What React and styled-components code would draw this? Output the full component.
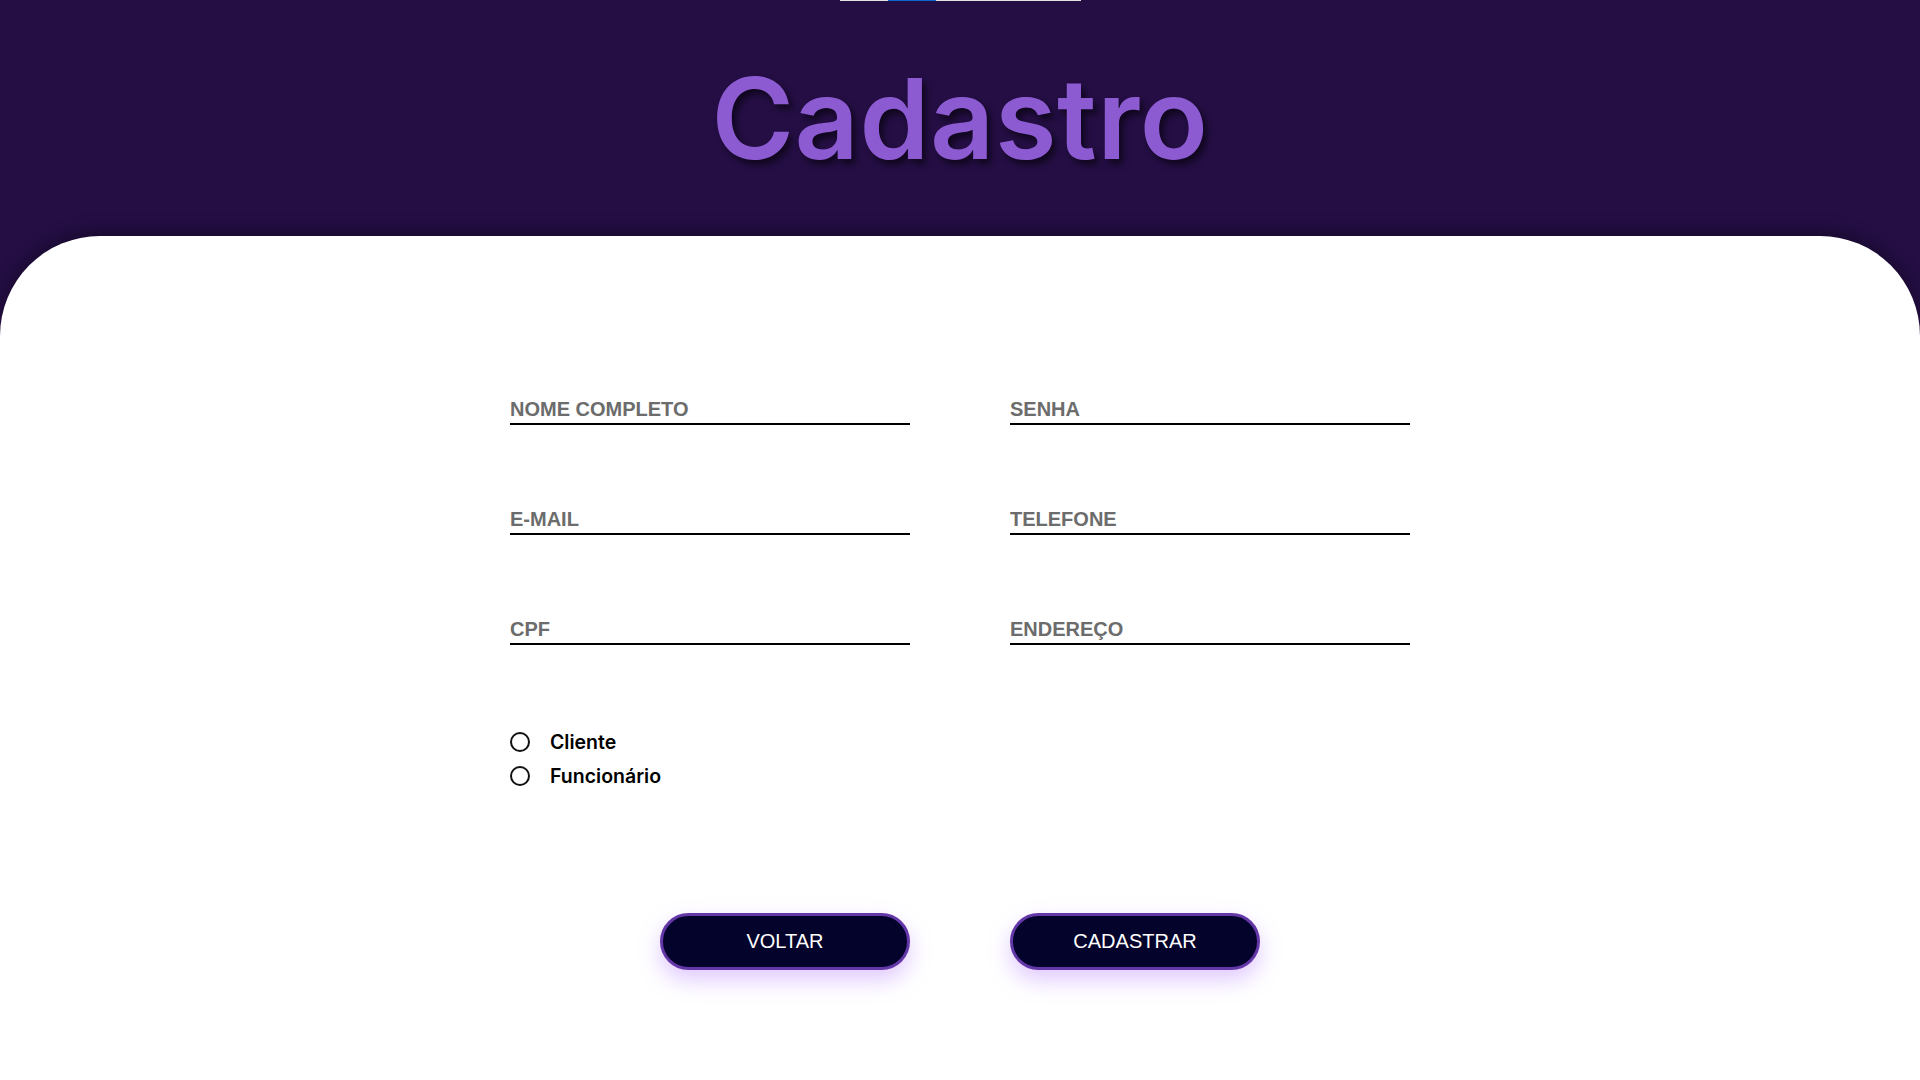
import React from "react";
import styled, { createGlobalStyle } from "styled-components";

const Global = createGlobalStyle`
  html, body { margin: 0; padding: 0; }
  body {
    background: #240e44;
    font-family: "Liberation Sans", Arial, sans-serif;
  }
  * { box-sizing: border-box; }
`;

const Page = styled.div`
  min-height: 100vh;
  display: flex;
  flex-direction: column;
  background: #240e44;
`;

const Header = styled.header`
  height: 236px;
  flex-shrink: 0;
  display: flex;
  flex-direction: column;
  align-items: center;
`;

const TopStrip = styled.div`
  width: 241px;
  height: 1px;
  background: #e4e4e4;
  display: flex;
  padding-left: 48px;
`;

const StripMark = styled.span`
  width: 48px;
  height: 1px;
  background: #0a66d0;
`;

const Title = styled.h1`
  margin: 61px 0 0;
  font-family: Inter, "Noto Sans", sans-serif;
  font-weight: 600;
  font-size: 112px;
  letter-spacing: 0.6px;
  line-height: 1;
  color: #8d5bd1;
  text-shadow: 4px 5px 6px rgba(0, 0, 0, 0.55);
`;

const Panel = styled.main`
  flex: 1;
  background: #ffffff;
  border-radius: 100px 100px 0 0;
  box-shadow: 0 -4px 18px rgba(0, 0, 0, 0.35);
  display: flex;
  flex-direction: column;
  align-items: center;
  padding-top: 159px;
`;

const Form = styled.form`
  width: 900px;
  display: flex;
  flex-direction: column;
`;

const FieldGrid = styled.div`
  display: grid;
  grid-template-columns: 400px 400px;
  column-gap: 100px;
  row-gap: 80px;
`;

const Field = styled.input`
  width: 400px;
  height: 30px;
  padding: 0;
  border: none;
  border-bottom: 2px solid #000;
  outline: none;
  background: transparent;
  font-family: "Liberation Sans", Arial, sans-serif;
  font-size: 20px;
  font-weight: 700;
  color: #333;
  &::placeholder {
    color: #6b6c6b;
    opacity: 1;
  }
`;

const RadioGroup = styled.div`
  margin-top: 87px;
  display: flex;
  flex-direction: column;
  gap: 14px;
`;

const RadioRow = styled.label`
  display: flex;
  align-items: center;
  gap: 20px;
  height: 20px;
  font-family: Inter, "Noto Sans", sans-serif;
  font-size: 19.5px;
  font-weight: 600;
  color: #000;
  cursor: pointer;
`;

const Radio = styled.input.attrs({ type: "radio" })`
  appearance: none;
  margin: 0;
  width: 20px;
  height: 20px;
  border: 2px solid #111;
  border-radius: 50%;
  background: #fff;
  &:checked {
    background: radial-gradient(circle, #111 0 4px, #fff 5px);
  }
`;

const ButtonRow = styled.div`
  margin-top: 127px;
  display: flex;
  justify-content: center;
  gap: 100px;
`;

const Button = styled.button`
  width: 250px;
  height: 57px;
  border-radius: 30px;
  border: 3px solid #6437a8;
  background: #03032b;
  color: #ffffff;
  font-family: "Liberation Sans", Arial, sans-serif;
  font-size: 20px;
  box-shadow: 0 10px 22px rgba(165, 100, 255, 0.35);
  cursor: pointer;
`;

export default function App() {
  return (
    <Page>
      <Global />
      <Header>
        <TopStrip>
          <StripMark />
        </TopStrip>
        <Title>Cadastro</Title>
      </Header>
      <Panel>
        <Form onSubmit={(e) => e.preventDefault()}>
          <FieldGrid>
            <Field placeholder="NOME COMPLETO" />
            <Field placeholder="SENHA" type="password" />
            <Field placeholder="E-MAIL" type="email" />
            <Field placeholder="TELEFONE" />
            <Field placeholder="CPF" />
            <Field placeholder="ENDEREÇO" />
          </FieldGrid>
          <RadioGroup>
            <RadioRow>
              <Radio name="tipo" value="cliente" />
              Cliente
            </RadioRow>
            <RadioRow>
              <Radio name="tipo" value="funcionario" />
              Funcionário
            </RadioRow>
          </RadioGroup>
          <ButtonRow>
            <Button type="button">VOLTAR</Button>
            <Button type="submit">CADASTRAR</Button>
          </ButtonRow>
        </Form>
      </Panel>
    </Page>
  );
}
